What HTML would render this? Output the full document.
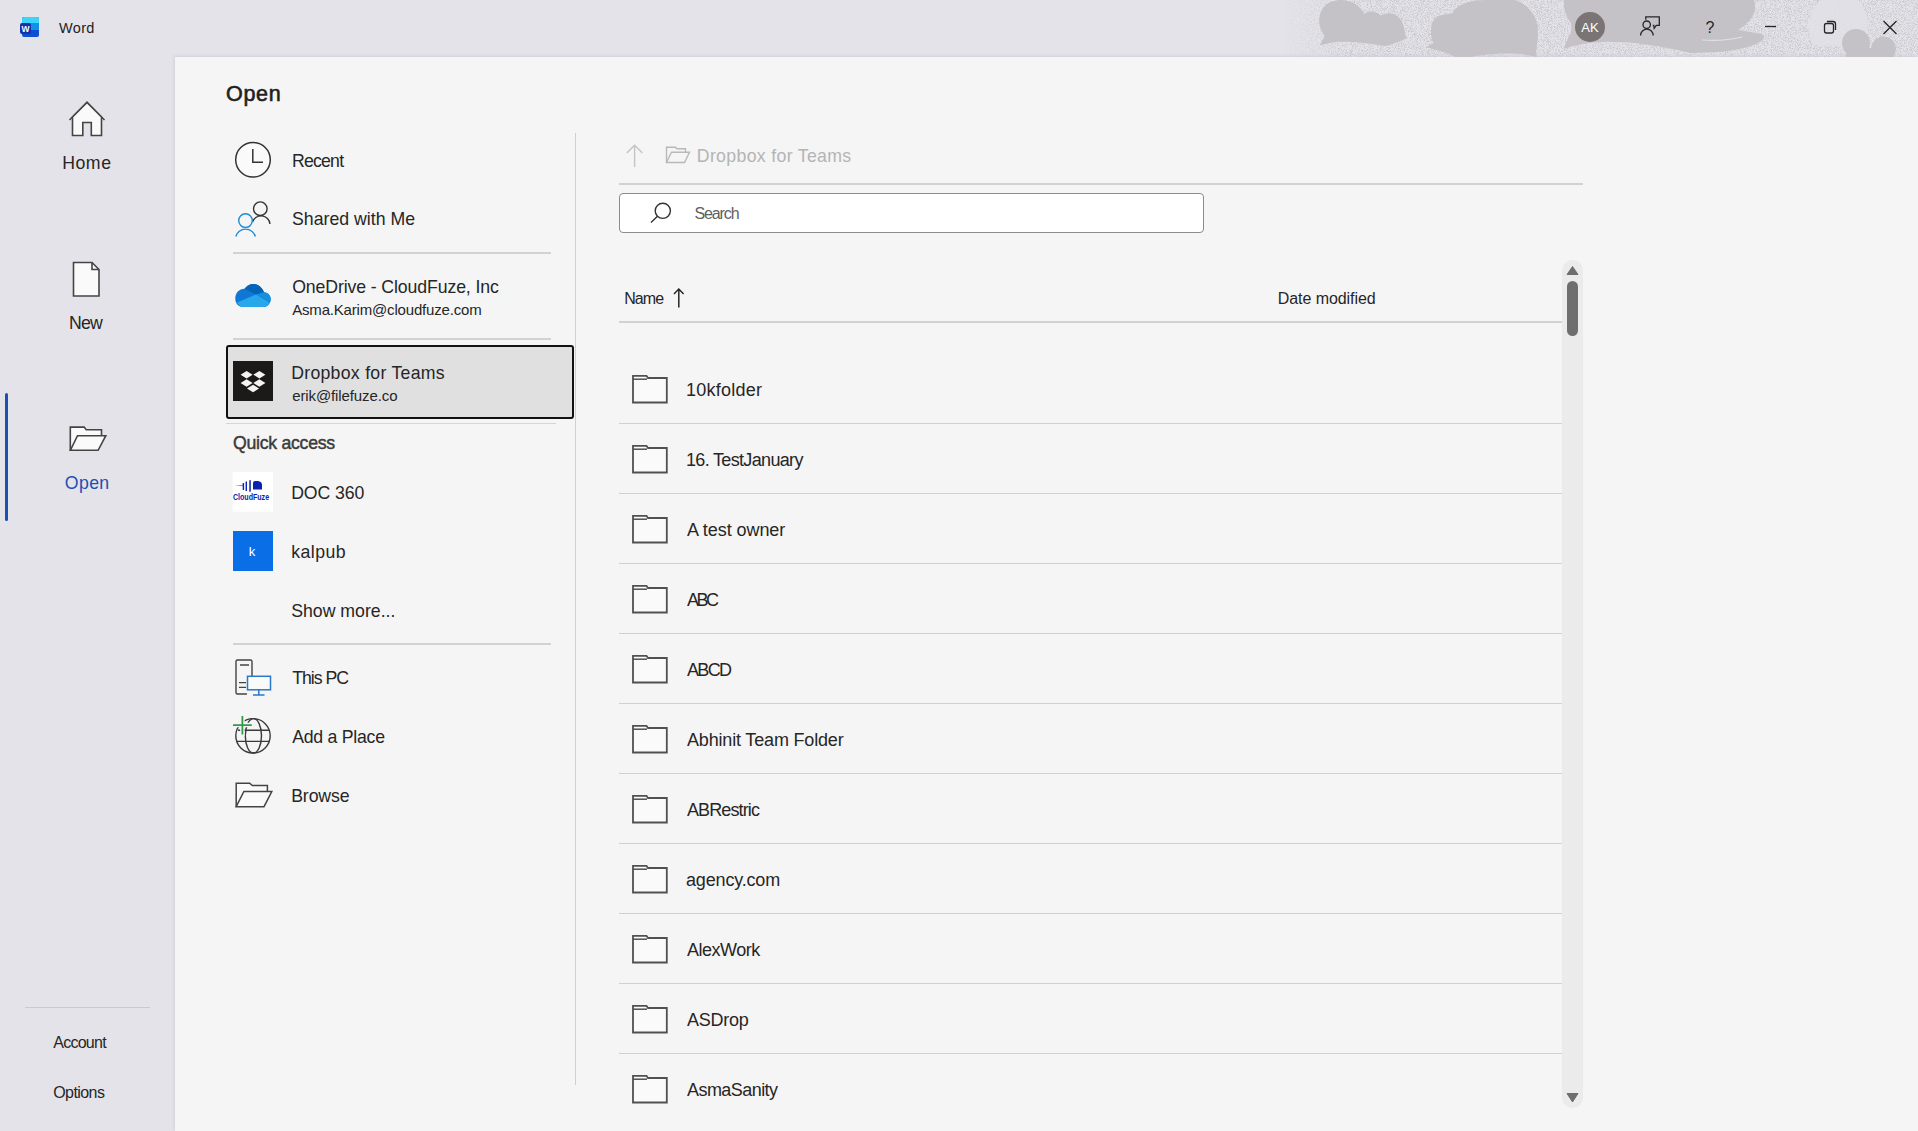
<!DOCTYPE html><html><head><meta charset="utf-8"><style>
*{margin:0;padding:0;box-sizing:border-box}
html,body{width:1918px;height:1131px;overflow:hidden}
body{position:relative;background:#f5f5f5;font-family:"Liberation Sans", sans-serif}
.t{position:absolute;white-space:nowrap;line-height:1}
.a{position:absolute}
svg{position:absolute;overflow:visible}
</style></head><body>
<div class="a" style="left:0;top:0;width:1918px;height:57px;background:#e4e3e9"></div>
<div class="a" style="left:0;top:57px;width:175px;height:1074px;background:#e4e3e9"></div>
<div class="a" style="left:175px;top:57px;width:1743px;height:1074px;background:#f5f5f5;box-shadow:-1px -1px 3px rgba(60,50,80,0.10)"></div>
<svg style="left:0;top:0" width="1918" height="57" viewBox="0 0 1918 57">
<defs>
<filter id="nzd" x="0" y="0" width="100%" height="100%" color-interpolation-filters="sRGB">
<feTurbulence type="fractalNoise" baseFrequency="1.3" numOctaves="1" seed="11"/>
<feColorMatrix type="matrix" values="0 0 0 0 0.79  0 0 0 0 0.785  0 0 0 0 0.81  4 0 0 0 -1.75"/>
</filter>
<linearGradient id="fade" x1="1282" x2="1345" y1="0" y2="0" gradientUnits="userSpaceOnUse">
<stop offset="0" stop-color="#fff" stop-opacity="0"/>
<stop offset="1" stop-color="#fff" stop-opacity="1"/>
</linearGradient>
<mask id="fm"><rect x="1282" y="0" width="636" height="57" fill="url(#fade)"/></mask>
<clipPath id="tb"><rect x="0" y="0" width="1918" height="57"/></clipPath>
</defs>
<g clip-path="url(#tb)">
<g mask="url(#fm)">
<rect x="1282" y="0" width="636" height="57" filter="url(#nzd)"/>
</g>
<path d="M1812,44 C1806,30 1808,8 1822,0 H1858 C1868,10 1870,28 1866,44 C1860,47 1850,45 1843,47 C1835,45 1822,47 1812,44 Z" fill="#e2e1e6" opacity="0.85"/>
<g fill="#c4c2c7">
<path d="M1320,45 C1322,40 1325,38 1324,35 C1316,25 1318,8 1330,2 C1345,-4 1360,4 1364,14 C1370,10 1378,12 1381,16 C1388,10 1400,14 1403,24 C1406,32 1404,37 1408,37.5 C1400,41 1392,45 1385,46 C1370,44 1355,41 1335,42 C1328,43 1323,45 1320,45 Z"/>
<path d="M1431,30 C1431,17 1440,14 1452,14 C1456,5 1468,0 1486,0 L1515,0 C1530,5 1538,18 1538,33 C1538,45 1535,52 1537,57 C1520,53 1500,52 1470,57 L1455,57 C1448,52 1437,51 1426,47 C1430,45 1434,44 1433,42 C1431,38 1431,34 1431,30 Z"/>
<path d="M1564,0 H1754 C1758,10 1752,22 1738,30 C1755,33 1766,33 1764,38 C1760,45 1740,50 1720,52 L1690,53 C1660,46 1630,41 1600,42 C1585,43 1572,46 1564,49 C1566,40 1575,30 1570,22 C1566,15 1563,8 1564,0 Z"/>
<circle cx="1856" cy="43" r="14"/><circle cx="1883.5" cy="49" r="12.5"/><rect x="1846" y="48" width="48" height="9"/>
</g>
<path d="M1702,40 C1715,41 1730,40 1742,37" stroke="#e0dfe4" stroke-width="1.2" fill="none"/>
</g>
</svg>
<svg style="left:20px;top:16px" width="20" height="22" viewBox="0 0 20 22">
<rect x="2" y="1" width="17" height="20" rx="2" fill="#0b4fd3"/>
<path d="M4,1 h13 a2,2 0 0 1 2,2 v4 h-17 v-4 a2,2 0 0 1 2,-2 z" fill="#3bd5fb"/>
<rect x="2" y="7" width="17" height="7" fill="#1590ea"/>
<rect x="0" y="7" width="11" height="11" rx="2" fill="#1630a8"/>
<text x="5.5" y="16" font-family="Liberation Sans" font-weight="700" font-size="8.5" fill="#fff" text-anchor="middle">W</text>
</svg>
<svg style="left:0;top:0" width="1918" height="57">
<circle cx="1590" cy="27" r="15" fill="#7a7574"/>
<text x="1590" y="32" font-family="Liberation Sans" font-size="13" fill="#fff" text-anchor="middle">AK</text>
<g fill="none" stroke="#262626" stroke-width="1.3">
<path d="M1645.8,19.8 V16.8 H1659.3 V25.3 H1656.3 L1654.2,28.3 L1653.8,25.3 H1652.8"/>
<circle cx="1646.7" cy="24.7" r="3.7"/>
<path d="M1640.6,35.5 a6.3,6.3 0 0 1 12.6,0"/>
<path d="M1765,26.5 h11"/>
<rect x="1824.5" y="23.5" width="9" height="9.5" rx="2"/>
<path d="M1827,21.5 h6 a2.5,2.5 0 0 1 2.5,2.5 v6"/>
<path d="M1883.5,21 l13,13 M1896.5,21 l-13,13"/>
</g>
<text x="1710" y="33" font-family="Liberation Sans" font-size="16" fill="#262626" text-anchor="middle">?</text>
</svg>
<svg style="left:0;top:0" width="175" height="1131">
<g stroke="#444" stroke-width="1.6" fill="#fafafa" stroke-linejoin="miter">
<path d="M69.5,120 L87,102.5 L104.5,120"/>
<path d="M72.5,117 V135.5 H82.8 V122.5 H91.3 V135.5 H101.5 V117 L87,102.5 Z"/>
<path d="M73.5,262.5 H92 L99,269.5 V296 H73.5 Z"/>
<path d="M92,262.5 V269.5 H99" fill="none"/>
<path d="M70.3,450.3 V427.1 H84.2 L86.2,429.7 H101.5 V435.7"/>
<path d="M70.3,450.3 L77.5,435.7 H105.8 L98.1,450.3 Z"/>
</g>
</svg>
<div class="a" style="left:5px;top:393px;width:3px;height:128px;border-radius:2px;background:#1c4fb4"></div>
<div class="a" style="left:25px;top:1007px;width:125px;height:1px;background:#cbc9cf"></div>
<div class="a" style="left:233px;top:252px;width:318px;height:2px;background:#d2d2d2"></div>
<div class="a" style="left:233px;top:338px;width:318px;height:2px;background:#d2d2d2"></div>
<div class="a" style="left:226px;top:423px;width:330px;height:1px;background:#d6d6d6"></div>
<div class="a" style="left:233px;top:643px;width:318px;height:2px;background:#d2d2d2"></div>
<div class="a" style="left:575px;top:133px;width:1px;height:952px;background:#d0d0d0"></div>
<div class="a" style="left:226px;top:345px;width:348px;height:74px;border:2px solid #111;border-radius:3px;background:#e0e0e0"></div>
<svg style="left:0;top:0" width="600" height="900">
<g fill="#fafafa" stroke="#333" stroke-width="1.5">
<circle cx="253" cy="159.8" r="17.3"/>
</g>
<path d="M252.8,149 V162.2 H263" fill="none" stroke="#333" stroke-width="1.5"/>
<g fill="none" stroke-width="1.4">
<circle cx="260.3" cy="208.7" r="6.8" stroke="#333"/>
<path d="M252.5,222 a9,9 0 0 1 17.5,2" stroke="#333"/>
<circle cx="245.5" cy="220.6" r="6.8" stroke="#1e8ad6"/>
<path d="M235.8,236.5 a10,9.5 0 0 1 19.5,0" stroke="#1e8ad6"/>
</g>
<!-- onedrive -->
<path d="M243,307 C238,307 235.3,303 235.3,298.5 C235.3,293 239,289 244.5,288.8 C247,286 250,284 253,284 C258,284 262,287.5 264,292.2 C268,292.5 270.7,295.5 270.7,299 C270.7,303.5 267.5,307 263.5,307 Z" fill="#0f78d4"/>
<path d="M244.5,288.8 C247,286 250,284 253,284 C258,284 262,287.5 264,292.2 L256,294.5 Z" fill="#0364b8"/>
<path d="M264,292.2 C268,292.5 270.7,295.5 270.7,299 C270.7,300 270.5,301 270,302 L256,294.5 Z" fill="#1490df"/>
<path d="M237,302.5 L256,294.5 L269.5,302.5 C268.5,305 266,307 263.5,307 L243,307 C240.5,307 238.5,305 237,302.5 Z" fill="#28a8ea"/>
<!-- dropbox -->
<rect x="233" y="361" width="40" height="40" fill="#1c1a19"/>
<g fill="#f6f4ef">
<path d="M246.6,370.9 l6,3.8 l-6,3.8 l-6,-3.8 z"/>
<path d="M259.4,370.9 l6,3.8 l-6,3.8 l-6,-3.8 z"/>
<path d="M246.6,379.2 l6,3.8 l-6,3.8 l-6,-3.8 z"/>
<path d="M259.4,379.2 l6,3.8 l-6,3.8 l-6,-3.8 z"/>
<path d="M253,384.7 l6,3.8 l-6,3.8 l-6,-3.8 z"/>
</g>
<!-- doc360 -->
<rect x="232.7" y="472.1" width="40.3" height="39.7" fill="#ffffff"/>
<g fill="#0b24b0">
<path d="M234.5,485.5 L243,484.8 L243,486.3 Z" opacity="0.5"/>
<rect x="242.7" y="483" width="1.4" height="7"/><rect x="245.6" y="481.5" width="1.4" height="9.5"/><rect x="249.3" y="480.2" width="1.5" height="11.5"/>
<path d="M253,483 C253,481 255,481 257,481 C259,481 262,482 262,484.5 V489.5 H253 Z"/>
<text x="232.9" y="500" font-family="Liberation Sans" font-size="8.3" font-weight="700" textLength="36.2" lengthAdjust="spacingAndGlyphs">CloudFuze</text>
</g>
<!-- kalpub -->
<rect x="233" y="531" width="40" height="40" fill="#0a6fe6"/>
<text x="252" y="556" font-family="Liberation Sans" font-size="13" fill="#fff" text-anchor="middle">k</text>
<!-- this pc -->
<g fill="none" stroke="#444" stroke-width="1.4">
<path d="M247,694 H237.5 a1.5,1.5 0 0 1 -1.5,-1.5 V661.5 a1.5,1.5 0 0 1 1.5,-1.5 H250.5 a1.5,1.5 0 0 1 1.5,1.5 V676"/>
<path d="M240,665 H249 M239,682.6 H246 M239,687.4 H246"/>
</g>
<g fill="#fafafa" stroke="#2a78c8" stroke-width="1.5">
<rect x="247.5" y="676.3" width="23" height="13.5"/>
<path d="M258.8,690 V695 M253,695 H264.5" fill="none"/>
</g>
<!-- add a place -->
<g fill="none" stroke="#3a3a3a" stroke-width="1.4">
<circle cx="253" cy="735.8" r="17.2"/>
<ellipse cx="253.4" cy="735.8" rx="8.1" ry="17.2"/>
<path d="M236,741.4 H270 M238,730.2 H269"/>
</g>
<path d="M242.4,715 V736 M232,725.1 H253" stroke="#f5f5f5" stroke-width="4.5"/>
<path d="M242.4,716 V734.5 M233,725.1 H251.8" stroke="#2f9a48" stroke-width="1.8"/>
<!-- browse -->
<g stroke="#444" stroke-width="1.5" fill="#fafafa">
<path d="M236.2,806.7 V783.2 H249.7 L252.3,785.5 H267.4 V791.5"/>
<path d="M236.2,806.7 L243.9,791.5 H271.8 L264,806.7 Z"/>
</g>
</svg>
<svg style="left:0;top:0" width="1918" height="1131">
<g fill="none" stroke="#c4c4c4" stroke-width="1.4">
<path d="M634.6,145 V167 M626.8,153 L634.6,145.2 L642.4,153"/>
</g>
<g fill="none" stroke="#b8b8b8" stroke-width="1.4">
<path d="M666.5,162.5 V147.2 H675.5 L677,148.8 H685.5 V152.3"/>
<path d="M666.5,162.5 L671.5,152.3 H689.5 L684.5,162.5 Z"/>
</g>
</svg>
<div class="a" style="left:619px;top:183px;width:964px;height:2px;background:#d2d2d2"></div>
<div class="a" style="left:619px;top:193px;width:585px;height:40px;background:#fff;border:1px solid #8c8c8c;border-radius:4px"></div>
<svg style="left:0;top:0" width="1918" height="300"><g fill="none" stroke="#333" stroke-width="1.4">
<circle cx="662.8" cy="210.8" r="7.6"/>
<path d="M657.5,216.2 L651,222.5"/>
</g></svg>
<div class="a" style="left:619px;top:321px;width:943px;height:2px;background:#d2d2d2"></div>
<svg style="left:0;top:0" width="1918" height="1131">
<path d="M678.8,289 V307.5 M674,294 L678.8,289 L683.6,294" fill="none" stroke="#262626" stroke-width="1.5"/>
</svg>
<div class="a" style="left:619px;top:423px;width:943px;height:1px;background:#d0d0d0"></div>
<div class="a" style="left:619px;top:493px;width:943px;height:1px;background:#d0d0d0"></div>
<div class="a" style="left:619px;top:563px;width:943px;height:1px;background:#d0d0d0"></div>
<div class="a" style="left:619px;top:633px;width:943px;height:1px;background:#d0d0d0"></div>
<div class="a" style="left:619px;top:703px;width:943px;height:1px;background:#d0d0d0"></div>
<div class="a" style="left:619px;top:773px;width:943px;height:1px;background:#d0d0d0"></div>
<div class="a" style="left:619px;top:843px;width:943px;height:1px;background:#d0d0d0"></div>
<div class="a" style="left:619px;top:913px;width:943px;height:1px;background:#d0d0d0"></div>
<div class="a" style="left:619px;top:983px;width:943px;height:1px;background:#d0d0d0"></div>
<div class="a" style="left:619px;top:1053px;width:943px;height:1px;background:#d0d0d0"></div>
<svg style="left:0;top:0" width="1918" height="1131"><path d="M633,402.5 V375.8 H646.5 L648,378 H666.8 V402.5 Z" fill="#fafafa" stroke="#505050" stroke-width="1.8"/><path d="M633,379.2 H647" fill="none" stroke="#505050" stroke-width="1.5"/><path d="M633,472.5 V445.8 H646.5 L648,448 H666.8 V472.5 Z" fill="#fafafa" stroke="#505050" stroke-width="1.8"/><path d="M633,449.2 H647" fill="none" stroke="#505050" stroke-width="1.5"/><path d="M633,542.5 V515.8 H646.5 L648,518 H666.8 V542.5 Z" fill="#fafafa" stroke="#505050" stroke-width="1.8"/><path d="M633,519.2 H647" fill="none" stroke="#505050" stroke-width="1.5"/><path d="M633,612.5 V585.8 H646.5 L648,588 H666.8 V612.5 Z" fill="#fafafa" stroke="#505050" stroke-width="1.8"/><path d="M633,589.2 H647" fill="none" stroke="#505050" stroke-width="1.5"/><path d="M633,682.5 V655.8 H646.5 L648,658 H666.8 V682.5 Z" fill="#fafafa" stroke="#505050" stroke-width="1.8"/><path d="M633,659.2 H647" fill="none" stroke="#505050" stroke-width="1.5"/><path d="M633,752.5 V725.8 H646.5 L648,728 H666.8 V752.5 Z" fill="#fafafa" stroke="#505050" stroke-width="1.8"/><path d="M633,729.2 H647" fill="none" stroke="#505050" stroke-width="1.5"/><path d="M633,822.5 V795.8 H646.5 L648,798 H666.8 V822.5 Z" fill="#fafafa" stroke="#505050" stroke-width="1.8"/><path d="M633,799.2 H647" fill="none" stroke="#505050" stroke-width="1.5"/><path d="M633,892.5 V865.8 H646.5 L648,868 H666.8 V892.5 Z" fill="#fafafa" stroke="#505050" stroke-width="1.8"/><path d="M633,869.2 H647" fill="none" stroke="#505050" stroke-width="1.5"/><path d="M633,962.5 V935.8 H646.5 L648,938 H666.8 V962.5 Z" fill="#fafafa" stroke="#505050" stroke-width="1.8"/><path d="M633,939.2 H647" fill="none" stroke="#505050" stroke-width="1.5"/><path d="M633,1032.5 V1005.8 H646.5 L648,1008 H666.8 V1032.5 Z" fill="#fafafa" stroke="#505050" stroke-width="1.8"/><path d="M633,1009.2 H647" fill="none" stroke="#505050" stroke-width="1.5"/><path d="M633,1102.5 V1075.8 H646.5 L648,1078 H666.8 V1102.5 Z" fill="#fafafa" stroke="#505050" stroke-width="1.8"/><path d="M633,1079.2 H647" fill="none" stroke="#505050" stroke-width="1.5"/></svg>
<div class="a" style="left:1562px;top:260px;width:21px;height:848px;border-radius:10.5px;background:#ebebeb"></div>
<div class="a" style="left:1567px;top:281px;width:11px;height:55px;border-radius:5.5px;background:#6e6e6e"></div>
<svg style="left:0;top:0" width="1918" height="1131">
<path d="M1572.5,266.5 L1578,274.5 H1567 Z" fill="#6e6e6e" stroke="#6e6e6e" stroke-width="1" stroke-linejoin="round"/>
<path d="M1572.5,1102 L1578,1093.5 H1567 Z" fill="#6e6e6e" stroke="#6e6e6e" stroke-width="1" stroke-linejoin="round"/>
</svg>
<div id="t0" class="t" style="left:59.00px;top:20.93px;font-size:14.5px;color:#1f1f1f;font-weight:400;letter-spacing:0.333px;-webkit-text-stroke:0px #1f1f1f"><span>Word</span></div>
<div id="t1" class="t" style="left:62.20px;top:154.72px;font-size:17.7px;color:#262626;font-weight:400;letter-spacing:0.533px;-webkit-text-stroke:0px #262626"><span>Home</span></div>
<div id="t2" class="t" style="left:69.00px;top:314.82px;font-size:17.7px;color:#262626;font-weight:400;letter-spacing:-0.750px;-webkit-text-stroke:0px #262626"><span>New</span></div>
<div id="t3" class="t" style="left:64.80px;top:475.02px;font-size:17.7px;color:#1c50b4;font-weight:400;letter-spacing:0.369px;-webkit-text-stroke:0px #1c50b4"><span>Open</span></div>
<div id="t4" class="t" style="left:53.20px;top:1035.16px;font-size:16px;color:#262626;font-weight:400;letter-spacing:-0.732px;-webkit-text-stroke:0px #262626"><span>Account</span></div>
<div id="t5" class="t" style="left:53.20px;top:1085.36px;font-size:16px;color:#262626;font-weight:400;letter-spacing:-0.567px;-webkit-text-stroke:0px #262626"><span>Options</span></div>
<div id="t6" class="t" style="left:226.00px;top:83.70px;font-size:21.5px;color:#1f1f1f;font-weight:400;letter-spacing:0.666px;-webkit-text-stroke:0.6px #1f1f1f"><span>Open</span></div>
<div id="t7" class="t" style="left:292.00px;top:152.82px;font-size:17.7px;color:#262626;font-weight:400;letter-spacing:-0.800px;-webkit-text-stroke:0px #262626"><span>Recent</span></div>
<div id="t8" class="t" style="left:292.00px;top:211.42px;font-size:17.7px;color:#262626;font-weight:400;letter-spacing:0.019px;-webkit-text-stroke:0px #262626"><span>Shared with Me</span></div>
<div id="t9" class="t" style="left:292.20px;top:279.12px;font-size:17.7px;color:#262626;font-weight:400;letter-spacing:-0.115px;-webkit-text-stroke:0px #262626"><span>OneDrive - CloudFuze, Inc</span></div>
<div id="t10" class="t" style="left:292.20px;top:302.00px;font-size:15px;color:#262626;font-weight:400;letter-spacing:-0.180px;-webkit-text-stroke:0px #262626"><span>Asma.Karim@cloudfuze.com</span></div>
<div id="t11" class="t" style="left:291.20px;top:364.62px;font-size:17.7px;color:#262626;font-weight:400;letter-spacing:0.273px;-webkit-text-stroke:0px #262626"><span>Dropbox for Teams</span></div>
<div id="t12" class="t" style="left:292.20px;top:388.30px;font-size:15px;color:#262626;font-weight:400;letter-spacing:-0.108px;-webkit-text-stroke:0px #262626"><span>erik@filefuze.co</span></div>
<div id="t13" class="t" style="left:233.00px;top:435.02px;font-size:17.7px;color:#3b3b3b;font-weight:400;letter-spacing:-0.273px;-webkit-text-stroke:0.45px #3b3b3b"><span>Quick access</span></div>
<div id="t14" class="t" style="left:291.20px;top:484.92px;font-size:17.7px;color:#262626;font-weight:400;letter-spacing:-0.102px;-webkit-text-stroke:0px #262626"><span>DOC 360</span></div>
<div id="t15" class="t" style="left:291.20px;top:543.52px;font-size:17.7px;color:#262626;font-weight:400;letter-spacing:0.480px;-webkit-text-stroke:0px #262626"><span>kalpub</span></div>
<div id="t16" class="t" style="left:291.20px;top:602.62px;font-size:17.7px;color:#262626;font-weight:400;letter-spacing:0.000px;-webkit-text-stroke:0px #262626"><span>Show more...</span></div>
<div id="t17" class="t" style="left:292.20px;top:669.62px;font-size:17.7px;color:#262626;font-weight:400;letter-spacing:-1.016px;-webkit-text-stroke:0px #262626"><span>This PC</span></div>
<div id="t18" class="t" style="left:292.20px;top:729.12px;font-size:17.7px;color:#262626;font-weight:400;letter-spacing:-0.260px;-webkit-text-stroke:0px #262626"><span>Add a Place</span></div>
<div id="t19" class="t" style="left:291.20px;top:788.22px;font-size:17.7px;color:#262626;font-weight:400;letter-spacing:-0.120px;-webkit-text-stroke:0px #262626"><span>Browse</span></div>
<div id="t20" class="t" style="left:696.80px;top:148.22px;font-size:17.7px;color:#b4b4b4;font-weight:400;letter-spacing:0.331px;-webkit-text-stroke:0px #b4b4b4"><span>Dropbox for Teams</span></div>
<div id="t21" class="t" style="left:694.40px;top:206.36px;font-size:16px;color:#606060;font-weight:400;letter-spacing:-1.080px;-webkit-text-stroke:0px #606060"><span>Search</span></div>
<div id="t22" class="t" style="left:624.20px;top:291.26px;font-size:16px;color:#262626;font-weight:400;letter-spacing:-0.933px;-webkit-text-stroke:0px #262626"><span>Name</span></div>
<div id="t23" class="t" style="left:1277.80px;top:290.66px;font-size:16px;color:#262626;font-weight:400;letter-spacing:-0.073px;-webkit-text-stroke:0px #262626"><span>Date modified</span></div>
<div id="t24" class="t" style="left:686.00px;top:381.16px;font-size:18px;color:#262626;font-weight:400;letter-spacing:0.250px;-webkit-text-stroke:0px #262626"><span>10kfolder</span></div>
<div id="t25" class="t" style="left:686.00px;top:451.16px;font-size:18px;color:#262626;font-weight:400;letter-spacing:-0.667px;-webkit-text-stroke:0px #262626"><span>16. TestJanuary</span></div>
<div id="t26" class="t" style="left:687.00px;top:521.16px;font-size:18px;color:#262626;font-weight:400;letter-spacing:-0.071px;-webkit-text-stroke:0px #262626"><span>A test owner</span></div>
<div id="t27" class="t" style="left:687.00px;top:591.16px;font-size:18px;color:#262626;font-weight:400;letter-spacing:-2.450px;-webkit-text-stroke:0px #262626"><span>ABC</span></div>
<div id="t28" class="t" style="left:687.00px;top:661.16px;font-size:18px;color:#262626;font-weight:400;letter-spacing:-1.667px;-webkit-text-stroke:0px #262626"><span>ABCD</span></div>
<div id="t29" class="t" style="left:687.00px;top:731.16px;font-size:18px;color:#262626;font-weight:400;letter-spacing:-0.169px;-webkit-text-stroke:0px #262626"><span>Abhinit Team Folder</span></div>
<div id="t30" class="t" style="left:687.00px;top:801.16px;font-size:18px;color:#262626;font-weight:400;letter-spacing:-0.883px;-webkit-text-stroke:0px #262626"><span>ABRestric</span></div>
<div id="t31" class="t" style="left:686.00px;top:871.16px;font-size:18px;color:#262626;font-weight:400;letter-spacing:-0.167px;-webkit-text-stroke:0px #262626"><span>agency.com</span></div>
<div id="t32" class="t" style="left:687.00px;top:941.16px;font-size:18px;color:#262626;font-weight:400;letter-spacing:-0.487px;-webkit-text-stroke:0px #262626"><span>AlexWork</span></div>
<div id="t33" class="t" style="left:687.00px;top:1011.16px;font-size:18px;color:#262626;font-weight:400;letter-spacing:-0.240px;-webkit-text-stroke:0px #262626"><span>ASDrop</span></div>
<div id="t34" class="t" style="left:687.00px;top:1081.16px;font-size:18px;color:#262626;font-weight:400;letter-spacing:-0.556px;-webkit-text-stroke:0px #262626"><span>AsmaSanity</span></div>
</body></html>
